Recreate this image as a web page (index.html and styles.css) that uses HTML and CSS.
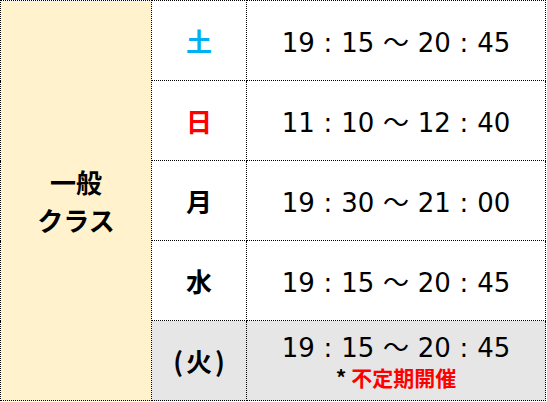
FILE: index.html
```html
<!DOCTYPE html>
<html lang="ja">
<head>
<meta charset="utf-8">
<link rel="stylesheet" href="styles.css">
</head>
<body>
<table class="schedule">
  <tr>
    <th class="course" rowspan="5">一般<br>クラス</th>
    <td class="day sat">土</td>
    <td class="time">19 : 15 ～ 20 : 45</td>
  </tr>
  <tr>
    <td class="day sun">日</td>
    <td class="time">11 : 10 ～ 12 : 40</td>
  </tr>
  <tr>
    <td class="day">月</td>
    <td class="time">19 : 30 ～ 21 : 00</td>
  </tr>
  <tr>
    <td class="day">水</td>
    <td class="time">19 : 15 ～ 20 : 45</td>
  </tr>
  <tr class="irregular">
    <td class="day paren">(火)</td>
    <td class="time last">19 : 15 ～ 20 : 45<div class="note">* <span class="red">不定期開催</span></div></td>
  </tr>
</table>
</body>
</html>
```
FILE: styles.css
```css
html, body {
  margin: 0;
  padding: 0;
  background: #fff;
}
.schedule {
  border-collapse: collapse;
  width: 546px;
  table-layout: fixed;
}
.schedule th,
.schedule td {
  border: 1px dotted #000;
  padding: 0;
  text-align: center;
  vertical-align: middle;
  height: 79px;
}
.course {
  width: 150px;
  background: #FFF2CC;
  font-family: "Noto Sans CJK JP", sans-serif;
  font-weight: bold;
  font-size: 26px;
  line-height: 38px;
  color: #000;
}
.day {
  width: 94px;
  font-family: "Noto Sans CJK JP", sans-serif;
  font-weight: bold;
  font-size: 26px;
  color: #000;
}
.paren {
  letter-spacing: 3px;
  text-indent: 3px;
}
.sat { color: #00B0F0; }
.sun { color: #FF0000; }
.time {
  font-family: "DejaVu Sans", "Noto Sans CJK JP", sans-serif;
  font-size: 26px;
  word-spacing: 0.5px;
  color: #000;
}
.time.last {
  line-height: 30px;
}
.irregular td {
  background: #E6E6E6;
}
.note {
  font-family: "Noto Sans CJK JP", sans-serif;
  font-weight: bold;
  font-size: 21px;
  line-height: 24px;
  margin-top: 2px;
  word-spacing: 0;
}
.red { color: #FF0000; }
```
